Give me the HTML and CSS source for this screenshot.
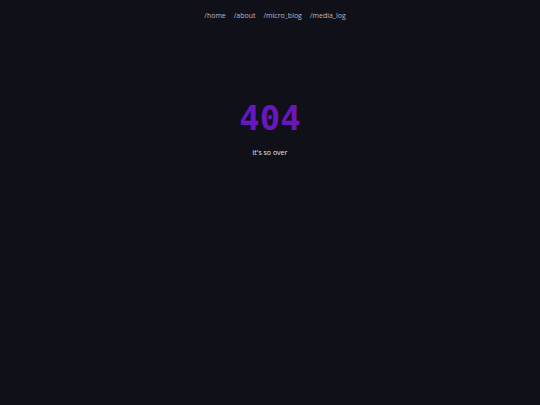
FILE: index.html
```html
<!DOCTYPE html>
<html lang="en">
<head>
    <meta charset="UTF-8">
    <meta name="viewport" content="width=device-width, initial-scale=1.0">
    <title>404</title>
    <link rel="stylesheet" href="styles.css">
</head>
<body>
    <nav class="nav">
        <a href="/">/home</a>
        <a href="/about">/about</a>
        <a href="/micro_blog">/micro_blog</a>
        <a href="/media_log">/media_log</a>
    </nav>
    <main class="not-found">
        <h1 class="code">404</h1>
        <p class="message">it's so over</p>
    </main>
</body>
</html>
```

FILE: styles.css
```css
html, body {
    height: 100%;
}
body {
    margin: 0;
    background-color: #101118;
    color: #e4e4e8;
    font-family: 'Open Sans', 'Noto Sans', sans-serif;
    font-size: 7px;
}
.nav {
    display: flex;
    justify-content: center;
    gap: 8px;
    padding: 11px 0 0 10px;
    line-height: 10px;
}
.nav a {
    color: #bab5c6;
    text-decoration: none;
}
.not-found {
    text-align: center;
    padding-top: 77px;
}
.code {
    margin: 0;
    font-family: 'DejaVu Sans Mono', monospace;
    font-size: 34px;
    font-weight: 600;
    line-height: 40px;
    color: #6816bd;
}
.message {
    margin: 10px 0 0;
    line-height: 10px;
}
```
